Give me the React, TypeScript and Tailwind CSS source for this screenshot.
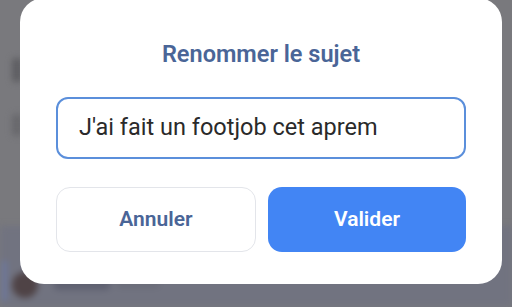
import React from "react";

export default function App() {
  return (
    <div
      className="relative w-[512px] h-[307px] overflow-hidden bg-[#79797d]"
      style={{ fontFamily: "Roboto, 'Liberation Sans', sans-serif" }}
    >
      {/* blurred page beneath the overlay */}
      <div className="w-full h-full flex flex-col blur-[3px]">
        <div className="flex-1 flex flex-col pl-[12px] pt-[58px] gap-[32px]">
          <div className="w-[10px] h-[24px] rounded bg-[#5e5e62]" />
          <div className="w-[10px] h-[22px] rounded bg-[#68686c]" />
        </div>
        <div className="h-[81px] bg-[#717380] flex items-end pb-[6px]">
          <div className="w-[3px] h-[40px] ml-[3px] bg-[#6a7ab0]" />
          <div className="ml-[6px] mb-[3px] w-[26px] h-[26px] rounded-full bg-[#4f4346]" />
          <div className="ml-[16px] mb-[11px] w-[56px] h-[12px] rounded bg-[#5e6070]" />
          <div className="ml-[6px] mb-[13px] w-[44px] h-[8px] rounded bg-[#6a6c78]" />
        </div>
      </div>

      <div className="absolute left-[20px] top-[-2px] w-[482px] h-[286px] rounded-[24px] bg-white flex flex-col px-[36px] pt-[42px] pb-[32px]">
        <div className="h-[28px] leading-[28px] text-center text-[23.5px] font-semibold text-[#4a6597]">
          Renommer le sujet
        </div>
        <div className="mt-[29px] h-[62px] rounded-[12px] border-2 border-[#5b8fdb] flex items-center pl-[21px] text-[23.5px] text-[#2a2a2a]">
          J'ai fait un footjob cet aprem
        </div>
        <div className="mt-[28px] h-[65px] flex gap-[12px]">
          <button className="flex-1 h-full rounded-[14px] border border-[#e3e5ea] bg-white text-[21px] font-semibold text-[#4a6597]">
            Annuler
          </button>
          <button className="flex-1 h-full rounded-[14px] bg-[#4285f4] text-[21px] font-semibold text-white">
            Valider
          </button>
        </div>
      </div>
    </div>
  );
}
